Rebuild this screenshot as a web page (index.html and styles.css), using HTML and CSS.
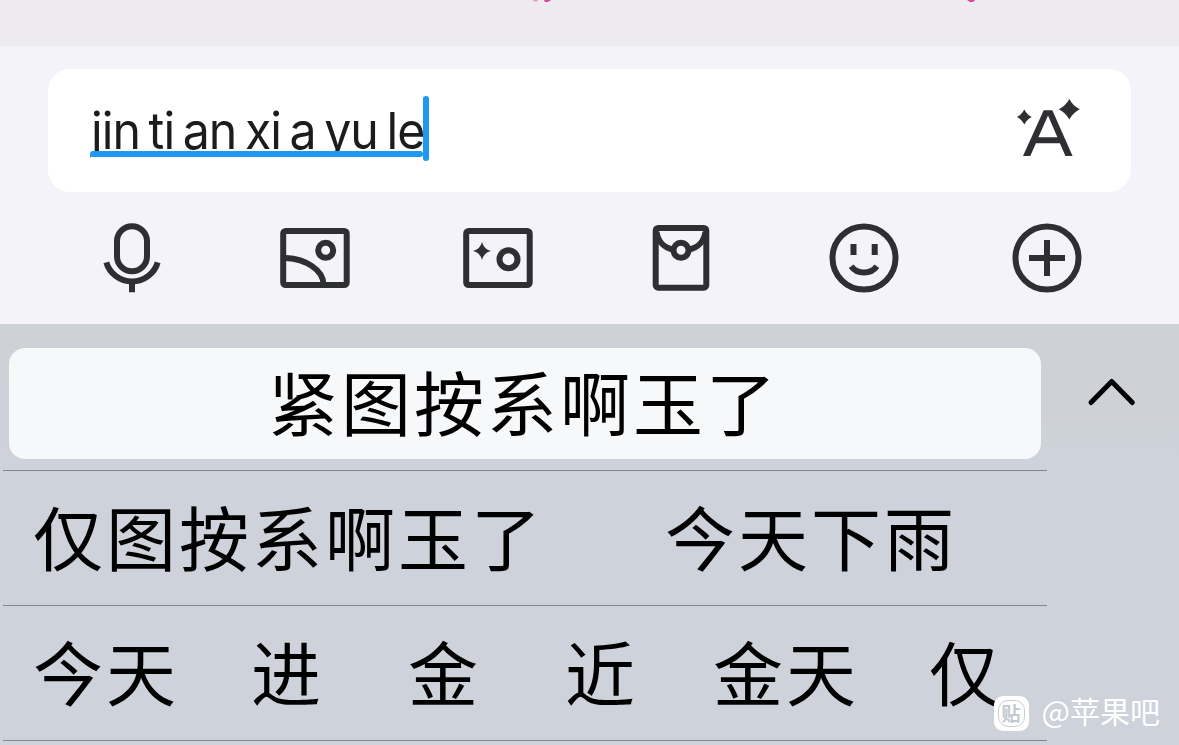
FILE: index.html
```html
<!DOCTYPE html>
<html lang="zh-CN">
<head>
    <meta charset="UTF-8">
    <meta name="viewport" content="width=device-width, initial-scale=1.0">
    <title>输入法</title>
    <link rel="stylesheet" href="styles.css">
</head>
<body>

<div class="chat">
    <svg class="chat-marks" viewBox="0 0 1179 46">
        <path class="pale" d="M533 0h5l-1 1.500h-3z"/>
        <path d="M544 0h7l-3 2h-3zM967 0h8l-2 2h-3z"/>
    </svg>
</div>

<div class="composer">
    <div class="input-box">
        <div class="pinyin">
            <div class="syllables"><span>jin</span><span>ti</span><span>an</span><span>xi</span><span>a</span><span>yu</span><span>le</span></div>
        </div>
        <div class="caret"></div>
        <svg class="ai-icon" viewBox="0 0 76 76">
            <path d="M13 66 33.700 20.300h8.600L62.600 66h-7.200l-5.500-12.700H25.900L20.300 66zM28.400 47.300h19L38 25.500z" fill-rule="evenodd"/>
            <path d="M14.300 19.500Q17 24.700 21.800 27Q17 29.300 14.300 34.500Q11.600 29.300 6.800 27Q11.600 24.700 14.300 19.500z"/>
            <path d="M59.300 9Q63 16 69.800 19.300Q63 22.600 59.300 29.600Q55.600 22.600 48.800 19.300Q55.600 16 59.300 9z"/>
        </svg>
    </div>

    <div class="toolbar">
        <svg class="icon" viewBox="0 0 76 76">
            <rect x="23" y="6.300" width="30" height="45" rx="15"/>
            <path d="M12.300 42.300a26.800 26.800 0 0 0 51.400 0M38 63v9.300"/>
        </svg>
        <svg class="icon" viewBox="0 0 76 76">
            <rect x="6.200" y="11" width="63.500" height="54" rx="2.500"/>
            <circle cx="48.700" cy="30.300" r="7.500"/>
            <path d="M9 38C29 39 46 50 46.500 64"/>
        </svg>
        <svg class="icon" viewBox="0 0 76 76">
            <rect x="6.200" y="11" width="63.500" height="54" rx="2.500"/>
            <circle cx="48.500" cy="39.300" r="9"/>
            <path class="solid" d="M22 22Q23.800 29.200 31 31Q23.800 32.800 22 40Q20.200 32.800 13 31Q20.200 29.200 22 22z"/>
        </svg>
        <svg class="icon" viewBox="0 0 76 76">
            <rect x="12.700" y="8" width="50.600" height="59.700" rx="2.500"/>
            <circle cx="38" cy="30.300" r="7.500"/>
            <path d="M13.500 12C15 21 21 28 30 29.500M62.500 12C61 21 55 28 46 29.500"/>
        </svg>
        <svg class="icon" viewBox="0 0 76 76">
            <circle cx="38" cy="38" r="31.500"/>
            <path d="M27.500 24v11M48.700 24v11M25.200 46.200c6 8.400 19.600 8.400 25.600 0"/>
        </svg>
        <svg class="icon" viewBox="0 0 76 76">
            <circle cx="38" cy="38" r="31.500"/>
            <path d="M20 38h36M38 20v36"/>
        </svg>
    </div>
</div>

<div class="keyboard">
    <div class="candidates">
        <div class="row row-first">
            <div class="selected">紧图按系啊玉了</div>
        </div>
        <div class="row row-second">
            <span>仅图按系啊玉了</span>
            <span>今天下雨</span>
        </div>
        <div class="row row-third">
            <span>今天</span>
            <span>进</span>
            <span>金</span>
            <span>近</span>
            <span>金天</span>
            <span>仅</span>
        </div>
    </div>
    <div class="side">
        <svg class="chevron" viewBox="0 0 50 30">
            <path d="M4 25.500 24.700 4.500 45.300 25.500"/>
        </svg>
    </div>
</div>

<div class="watermark">
    <span class="badge"><span class="badge-text">贴</span></span>
    <span class="watermark-name">@苹果吧</span>
</div>

</body>
</html>
```
FILE: styles.css
```css
* {
    box-sizing: border-box;
}
body {
    margin: 0;
    width: 1179px;
    height: 745px;
    overflow: hidden;
    position: relative;
    font-family: "Noto Sans CJK SC", sans-serif;
    background: #f5f3fa;
}
svg {
    display: block;
}
.chat {
    height: 46px;
    background: #edebf0;
}
.chat-marks {
    width: 1179px;
    height: 46px;
    fill: #d8479b;
}
.chat-marks .pale {
    fill: #e39cc4;
}
.composer {
    height: 278px;
    padding: 23px 48px 0;
    background: #f5f3fa;
}
.input-box {
    display: flex;
    height: 123px;
    padding: 0 45px 0 42px;
    background: #fff;
    border-radius: 22px;
}
.pinyin {
    position: relative;
    width: 333px;
    height: 61px;
    margin-top: 27px;
    padding-left: 1px;
}
/* the underline covers the descenders */
.pinyin::after {
    content: "";
    position: absolute;
    left: 0;
    bottom: 0;
    width: 100%;
    height: 6px;
    border-radius: 3px;
    background: #1e98f0;
    box-shadow: 0 5px 0 #fff;
}
.syllables {
    display: flex;
    gap: 9px;
    font-family: Inter, sans-serif;
    font-size: 51px;
    line-height: 69px;
    letter-spacing: -1px;
    color: #1c1c1e;
    white-space: nowrap;
    transform: scaleX(0.946);
    transform-origin: 0 0;
}
.caret {
    width: 6px;
    height: 65px;
    margin-top: 27px;
    border-radius: 3px;
    background: #1e98f0;
}
.ai-icon {
    width: 76px;
    height: 76px;
    margin: 21px 0 0 auto;
    fill: #2e2f33;
}
.toolbar {
    display: grid;
    grid-template-columns: repeat(6, 183px);
    justify-content: center;
    justify-items: center;
    margin: 28px -10px 0;
}
.icon {
    width: 76px;
    height: 76px;
    fill: none;
    stroke: #2e2f33;
    stroke-width: 6;
}
.icon .solid {
    fill: #2e2f33;
    stroke: none;
}
.keyboard {
    display: flex;
    height: 421px;
    background: linear-gradient(#ced1d5, #ced2da 35%, #ced2da);
}
.candidates {
    width: 1047px;
    padding-left: 3px;
}
.row {
    display: flex;
    height: 135px;
    border-bottom: 1px solid #85878c;
    font-size: 70px;
    font-weight: 400;
    line-height: 129px;
    letter-spacing: 3px;
    color: #000;
    white-space: nowrap;
}
.row-first {
    height: 147px;
    padding: 24px 6px 0;
}
.selected {
    width: 1032px;
    height: 111px;
    padding-right: 3px;
    border-radius: 16px;
    line-height: 105px;
    text-align: center;
    background: #f6f8fa;
}
.row-second {
    gap: 121px;
    padding-left: 30px;
}
.row-third {
    display: grid;
    grid-template-columns: 218px 157px 157px 148px 216px 73px;
    padding-left: 30px;
}
.side {
    flex: 1;
    padding: 53px 0 0 40px;
}
.chevron {
    width: 50px;
    height: 30px;
    fill: none;
    stroke: #000;
    stroke-width: 5;
    stroke-linecap: round;
    stroke-linejoin: round;
}
/* watermark lies over the last row */
.watermark {
    position: absolute;
    right: 19px;
    bottom: 14px;
    display: flex;
    align-items: center;
    gap: 12px;
    height: 35px;
    font-size: 30px;
    font-weight: 400;
    color: #fff;
}
.watermark-name {
    padding-bottom: 8px;
}
.badge {
    display: flex;
    align-items: center;
    justify-content: center;
    width: 35px;
    height: 35px;
    margin-right: 1px;
    border-radius: 9px;
    background: #fff;
}
.badge-text {
    width: 27px;
    height: 27px;
    border: 1px solid #c9cdd5;
    border-radius: 10px;
    font-size: 19px;
    font-weight: 700;
    line-height: 23px;
    text-align: center;
    color: #c3c8d0;
}
```
